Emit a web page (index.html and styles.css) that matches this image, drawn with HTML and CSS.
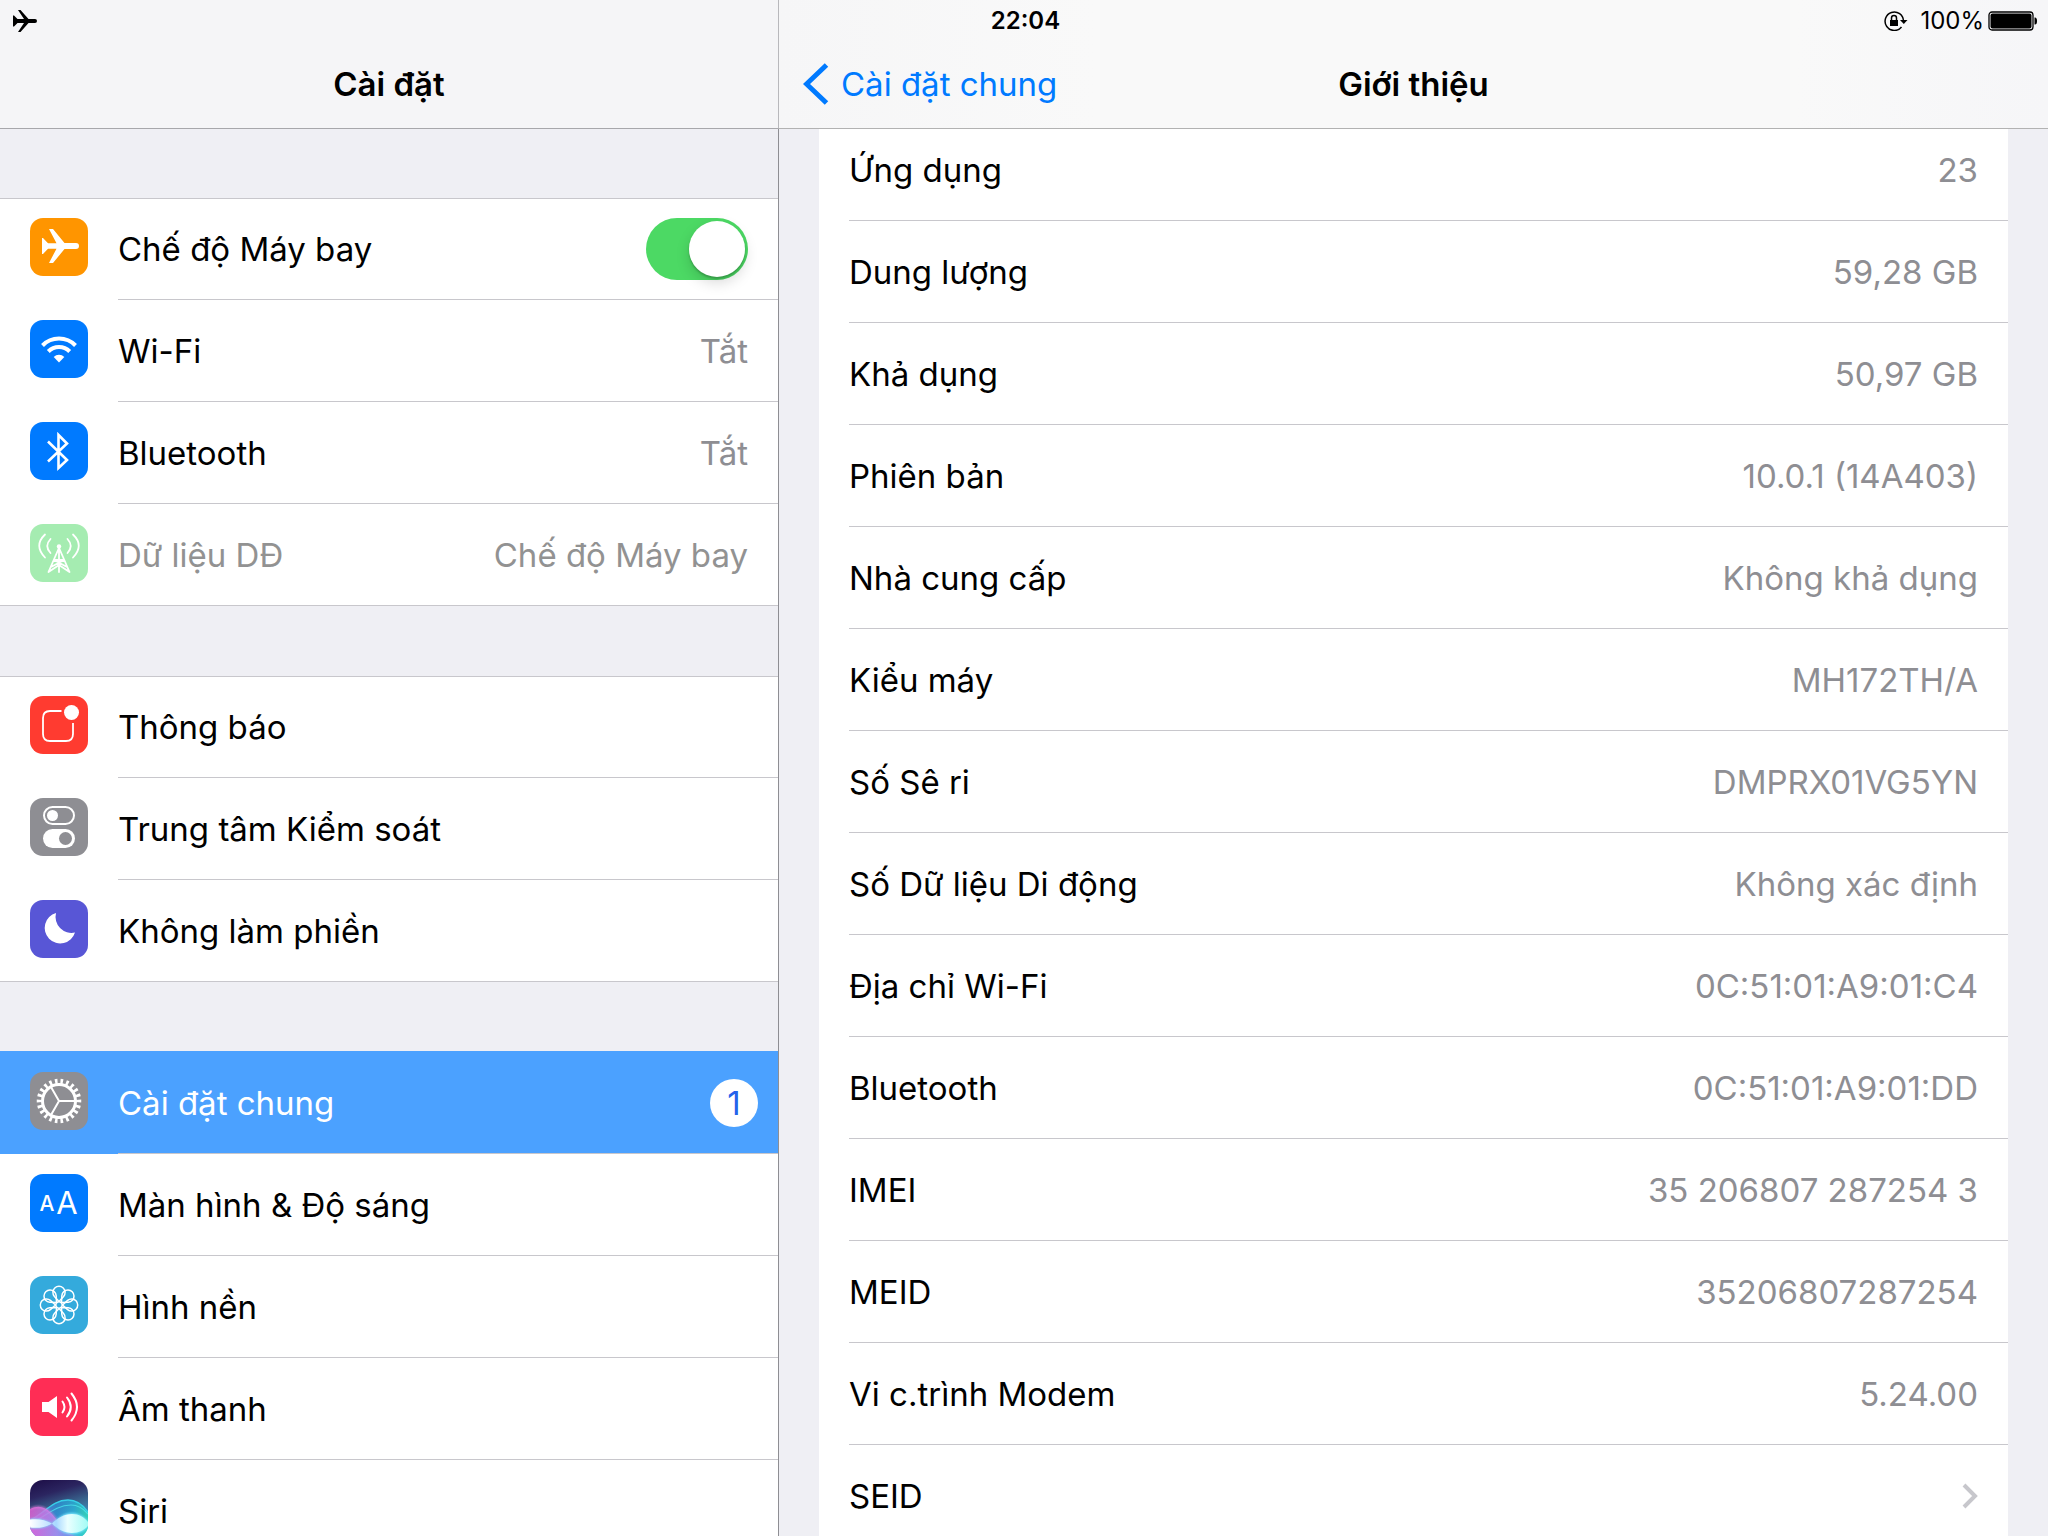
FILE: index.html
```
<!DOCTYPE html>
<html lang="vi">
<head>
<meta charset="utf-8">
<meta name="viewport" content="width=device-width, initial-scale=1">
<title>Cài đặt</title>
<link rel="stylesheet" href="styles.css">
</head>
<body>
<div class="screen">
  <div class="status-bar">
    <div class="status-left">
      <svg class="status-plane" viewBox="0 0 24 22" role="img" aria-label="Chế độ Máy bay"><path d="M0 5.500h1l3.500 3.500h6.500L5 0h2.500l8 9H22a2 2 0 0 1 0 4h-6.500l-8 9H5l6-9H4.500L1 16.500H0z"/></svg>
    </div>
    <time class="status-time">22:04</time>
    <div class="status-right">
      <svg class="status-lock" viewBox="0 0 24 20" role="img" aria-label="Khóa xoay"><path d="M17.500 16a9.200 9.200 0 1 1 2-6" fill="none" stroke="#000" stroke-width="1.500"/><path d="M16 9h7.500l-3.700 4z"/><path d="M6 9h8v6H6z"/><path d="M7.500 9V7a2.500 2.500 0 0 1 5 0v2" fill="none" stroke="#000" stroke-width="1.500"/></svg>
      <span class="status-percent">100%</span>
      <svg class="status-battery" viewBox="0 0 50 20" role="img" aria-label="Pin"><rect x="1" y="1" width="44" height="18" rx="3" fill="none" stroke="#000" stroke-width="1.300"/><rect x="2.500" y="2.500" width="41" height="15" rx="2"/><path d="M46.500 6.500h.5q2 0 2 3.500t-2 3.500h-.5z"/></svg>
    </div>
  </div>

  <aside class="sidebar">
    <header class="nav-bar nav-bar-side">
      <h1 class="nav-title">Cài đặt</h1>
    </header>
    <nav class="side-scroll">
      <ul class="group">
        <li class="row">
          <svg class="icon icon-orange" viewBox="0 0 58 58" aria-hidden="true"><path fill="#fff" d="M12 20h1l5 5.300h8.500L19 11h4l11.500 14H46a3 3 0 0 1 0 6H34.500L23 45h-4l7.500-14.300H18L13 36h-1z"/></svg>
          <label class="cell" for="airplane"><span class="label">Chế độ Máy bay</span><input class="switch" id="airplane" type="checkbox" role="switch" checked></label>
        </li>
        <li class="row">
          <svg class="icon icon-blue" viewBox="0 0 58 58" aria-hidden="true"><path fill="none" stroke="#fff" stroke-width="4" d="M12.500 25.500a23 23 0 0 1 33 0M18.300 31.500a15 15 0 0 1 21.400 0"/><path fill="#fff" d="M29 42.500l-5.300-5.500a7.500 7.500 0 0 1 10.600 0z"/></svg>
          <a class="cell" href="#wifi"><span class="label">Wi-Fi</span><span class="value">Tắt</span></a>
        </li>
        <li class="row">
          <svg class="icon icon-blue" viewBox="0 0 58 58" aria-hidden="true"><path fill="none" stroke="#fff" stroke-width="2.600" d="M18 19.500L37 38l-8.500 8V13l8.500 8.500L18 39.500"/></svg>
          <a class="cell" href="#bluetooth"><span class="label">Bluetooth</span><span class="value">Tắt</span></a>
        </li>
        <li class="row row-disabled">
          <svg class="icon icon-green" viewBox="0 0 58 58" aria-hidden="true"><g fill="none" stroke="#fff" stroke-width="1.800" stroke-linecap="round"><path d="M29 23v25M28.500 25L18.500 48M29.500 25l10 23M24 36h10M21 43l13-7M37 43l-13-7M18.500 48L29 41l10.500 7M20.500 15q-6.500 7 0 14M37.500 15q6.500 7 0 14M15 10.500q-11.500 11 0 23M43 10.500q11.500 11 0 23"/></g><circle cx="29" cy="22.500" r="2.200" fill="#fff"/></svg>
          <a class="cell" href="#mobile" aria-disabled="true"><span class="label">Dữ liệu DĐ</span><span class="value">Chế độ Máy bay</span></a>
        </li>
      </ul>

      <ul class="group">
        <li class="row">
          <svg class="icon icon-red" viewBox="0 0 58 58" aria-hidden="true"><path fill="none" stroke="#fff" stroke-width="1.800" d="M31.500 15H20q-7 0-7 7v16q0 7 7 7h16q7 0 7-7V27"/><circle cx="41.500" cy="16.500" r="7.500" fill="#fff"/></svg>
          <a class="cell" href="#notifications"><span class="label">Thông báo</span></a>
        </li>
        <li class="row">
          <svg class="icon icon-gray" viewBox="0 0 58 58" aria-hidden="true"><rect x="14" y="9" width="30" height="17" rx="8.500" fill="none" stroke="#fff" stroke-width="2"/><circle cx="22.500" cy="17.500" r="5.500" fill="#fff"/><rect x="13" y="31" width="32" height="19" rx="9.500" fill="#fff"/><circle cx="35.500" cy="40.500" r="6.500" fill="#8e8e93"/></svg>
          <a class="cell" href="#control"><span class="label">Trung tâm Kiểm soát</span></a>
        </li>
        <li class="row">
          <svg class="icon icon-purple" viewBox="0 0 58 58" aria-hidden="true"><path fill="#fff" d="M26 13a15.500 15.500 0 1 0 19 19.500A16 16 0 0 1 26 13z"/></svg>
          <a class="cell" href="#dnd"><span class="label">Không làm phiền</span></a>
        </li>
      </ul>

      <ul class="group">
        <li class="row row-active">
          <svg class="icon icon-gray" viewBox="0 0 58 58" aria-hidden="true"><g fill="none" stroke="#fff"><circle cx="29" cy="29" r="19.500" stroke-width="5.500" pathLength="220" stroke-dasharray="4.600 5.400" stroke-dashoffset="2.300"/><circle cx="29" cy="29" r="16.500" stroke-width="3"/><path stroke-width="2" d="M29 29h16M29 29l-8-13.900M29 29l-8 13.900"/></g></svg>
          <a class="cell" href="#general" aria-current="page"><span class="label">Cài đặt chung</span><span class="badge">1</span></a>
        </li>
        <li class="row">
          <svg class="icon icon-blue" viewBox="0 0 58 58" aria-hidden="true"><text class="glyph glyph-small" x="17" y="37">A</text><text class="glyph glyph-large" x="37" y="40">A</text></svg>
          <a class="cell" href="#display"><span class="label">Màn hình &amp; Độ sáng</span></a>
        </li>
        <li class="row">
          <svg class="icon icon-cyan" viewBox="0 0 58 58" aria-hidden="true">
            <defs><path id="petal" d="M0 -3.500L-4.600 -8.600A6.100 6.100 0 1 1 4.600 -8.600z"/></defs>
            <g transform="translate(29 29)" fill="none" stroke="#fff" stroke-width="1.500">
              <circle r="3.200"/>
              <use href="#petal"/>
              <use href="#petal" transform="rotate(45)"/>
              <use href="#petal" transform="rotate(90)"/>
              <use href="#petal" transform="rotate(135)"/>
              <use href="#petal" transform="rotate(180)"/>
              <use href="#petal" transform="rotate(225)"/>
              <use href="#petal" transform="rotate(270)"/>
              <use href="#petal" transform="rotate(315)"/>
            </g>
          </svg>
          <a class="cell" href="#wallpaper"><span class="label">Hình nền</span></a>
        </li>
        <li class="row">
          <svg class="icon icon-pink" viewBox="0 0 58 58" aria-hidden="true"><path fill="#fff" d="M12 24h6.500L27 18v22l-8.500-6H12z"/><path fill="none" stroke="#fff" stroke-width="2" stroke-linecap="round" d="M32.500 23.500q4 5.500 0 11M37 19.500q7.500 9.500 0 19M41.500 15.500q11 13.500 0 27"/></svg>
          <a class="cell" href="#sounds"><span class="label">Âm thanh</span></a>
        </li>
        <li class="row">
          <svg class="icon" viewBox="0 0 58 58" aria-hidden="true">
            <defs>
              <linearGradient id="siri-sky" x1="0" y1="0" x2="0.300" y2="1"><stop offset="0" stop-color="#1c0c45"/><stop offset="0.300" stop-color="#2b2560"/><stop offset="0.550" stop-color="#38628c"/><stop offset="1" stop-color="#48b4e0"/></linearGradient>
              <linearGradient id="siri-wave" x1="0" y1="0" x2="1" y2="0"><stop offset="0" stop-color="#8f7bf0"/><stop offset="0.450" stop-color="#2f8fd8"/><stop offset="0.750" stop-color="#28b5dc"/><stop offset="1" stop-color="#2fe3b4"/></linearGradient>
              <linearGradient id="siri-pink" x1="0" y1="0" x2="1" y2="0"><stop offset="0" stop-color="#e85fd6"/><stop offset="0.550" stop-color="#b48af0"/><stop offset="1" stop-color="#4f8fe8"/></linearGradient>
              <linearGradient id="siri-glow" x1="0" y1="0" x2="1" y2="0"><stop offset="0" stop-color="#fff"/><stop offset="0.450" stop-color="#a9d8ff"/><stop offset="0.650" stop-color="#eaffff"/><stop offset="1" stop-color="#a4fbf5"/></linearGradient>
              <filter id="siri-soft"><feGaussianBlur stdDeviation="0.800"/></filter>
            </defs>
            <rect width="58" height="58" fill="url(#siri-sky)"/>
            <path d="M0 40C14 34 22 20 38 20c9 0 15 5 20 12v26H0z" fill="url(#siri-wave)" opacity=".75"/>
            <path d="M0 44C16 36 26 25 41 25c7 0 12 3 17 9" fill="none" stroke="#4be4ee" stroke-width="1.200" opacity=".8"/>
            <path d="M0 40C14 34 22 20 38 20c9 0 15 5 20 12" fill="none" stroke="#36cfe8" stroke-width="1.300"/>
            <path d="M0 29c14-7 22 4 29 14 6 8 12 13 20 15H0z" fill="url(#siri-pink)" opacity=".8"/>
            <path d="M0 29c14-7 22 4 29 14 6 8 12 13 20 15" fill="none" stroke="#f57be6" stroke-width="1.200" filter="url(#siri-soft)"/>
            <path d="M0 39c8-1 15 0 22 4.500C28 38 34 33 42 33c7 0 12 4 16 8v6c-4 4-9 7-16 7-8 0-14-5-20-10.500C15 48 8 49 0 48z" fill="#7fe8ff" filter="url(#siri-soft)"/>
            <path d="M0 39.500c8-1 15 0 22 4C28 38 34 34 42 34c7 0 12 3 16 8v4c-4 4-9 7-16 7-8 0-14-4-20-9.500-7 4-14 5-22 4z" fill="url(#siri-glow)"/>
          </svg>
          <a class="cell" href="#siri"><span class="label">Siri</span></a>
        </li>
      </ul>
    </nav>
  </aside>

  <main class="detail">
    <header class="nav-bar nav-bar-detail">
      <a class="back" href="#general"><svg class="back-arrow" viewBox="0 0 26 42" aria-hidden="true"><path d="M23.500 2L3.500 21l20 19" fill="none" stroke="#007aff" stroke-width="5"/></svg>Cài đặt chung</a>
      <h2 class="nav-title">Giới thiệu</h2>
    </header>
    <div class="detail-scroll">
      <dl class="info">
        <div class="info-row"><dt>Ứng dụng</dt><dd>23</dd></div>
        <div class="info-row"><dt>Dung lượng</dt><dd>59,28 GB</dd></div>
        <div class="info-row"><dt>Khả dụng</dt><dd>50,97 GB</dd></div>
        <div class="info-row"><dt>Phiên bản</dt><dd>10.0.1 (14A403)</dd></div>
        <div class="info-row"><dt>Nhà cung cấp</dt><dd>Không khả dụng</dd></div>
        <div class="info-row"><dt>Kiểu máy</dt><dd>MH172TH/A</dd></div>
        <div class="info-row"><dt>Số Sê ri</dt><dd>DMPRX01VG5YN</dd></div>
        <div class="info-row"><dt>Số Dữ liệu Di động</dt><dd>Không xác định</dd></div>
        <div class="info-row"><dt>Địa chỉ Wi-Fi</dt><dd>0C:51:01:A9:01:C4</dd></div>
        <div class="info-row"><dt>Bluetooth</dt><dd>0C:51:01:A9:01:DD</dd></div>
        <div class="info-row"><dt>IMEI</dt><dd>35 206807 287254 3</dd></div>
        <div class="info-row"><dt>MEID</dt><dd>35206807287254</dd></div>
        <div class="info-row"><dt>Vi c.trình Modem</dt><dd>5.24.00</dd></div>
        <div class="info-row"><dt>SEID</dt><dd><svg class="disclosure" viewBox="0 0 16 26" aria-hidden="true"><path d="M2 2l11 11L2 24" fill="none" stroke="#c7c7cc" stroke-width="4"/></svg></dd></div>
      </dl>
    </div>
  </main>
</div>
</body>
</html>
```
FILE: styles.css
```
* {
  box-sizing: border-box;
}

body {
  margin: 0;
  background: #efeff4;
  color: #000;
  font-family: Inter, "Noto Sans", sans-serif;
  font-size: 33px;
  line-height: 40px;
}

ul, dl, dd, h1, h2 {
  margin: 0;
  padding: 0;
}

a {
  color: inherit;
  text-decoration: none;
}

.screen {
  display: grid;
  grid-template-columns: 779px 1fr;
  grid-template-rows: 40px 1fr;
  height: 100vh;
  overflow: hidden;
}

/* The status bar shares the top strip with both navigation bars. */
.status-bar {
  grid-area: 1 / 1 / 2 / 3;
  z-index: 1;
  display: grid;
  grid-template-columns: 1fr auto 1fr;
  align-items: center;
  padding: 1px 10px 0 13px;
  font-size: 24px;
}

.status-left,
.status-right {
  display: flex;
  align-items: center;
}

.status-right {
  justify-content: flex-end;
}

.status-plane {
  width: 24px;
  height: 22px;
}

.status-time {
  font-weight: 600;
}

.status-lock {
  width: 24px;
  height: 20px;
  margin-right: 12px;
}

.status-percent {
  margin-right: 4px;
}

.status-battery {
  width: 50px;
  height: 20px;
}

.sidebar,
.detail {
  grid-row: 1 / 3;
  display: flex;
  flex-direction: column;
  min-width: 0;
  min-height: 0;
}

.sidebar {
  grid-column: 1;
}

.detail {
  grid-column: 2;
}

.nav-bar {
  flex: none;
  display: grid;
  grid-template-columns: 1fr auto 1fr;
  align-items: center;
  height: 129px;
  padding-top: 40px;
  border-bottom: 1px solid #a7a7ab;
}

.nav-bar-side {
  background: #f5f5f7;
  border-right: 1px solid #b8b8bc;
}

.nav-bar-detail {
  background: linear-gradient(90deg, #f6f6f7, #f9f9f9 25%, #f9f9f9 80%, #f6f6f8);
  border-bottom-color: #b2b2b2;
}

.nav-title {
  grid-column: 2;
  font-size: 33px;
  font-weight: 600;
}

.back {
  grid-column: 1;
  grid-row: 1;
  display: flex;
  align-items: center;
  gap: 12px;
  padding-left: 24px;
  color: #007aff;
}

.back-arrow {
  width: 26px;
  height: 42px;
}

.side-scroll {
  flex: 1;
  min-height: 0;
  overflow: hidden;
  padding-top: 69px;
  border-right: 1px solid #8e8e93;
}

.group {
  list-style: none;
  background: #fff;
  box-shadow: inset 0 1px #c8c7cc, inset 0 -1px #c8c7cc;
}

.group + .group {
  margin-top: 70px;
}

.row {
  display: flex;
  height: 102px;
  padding-left: 30px;
}

.icon {
  flex: none;
  width: 58px;
  height: 58px;
  margin: 20px 30px 0 0;
  border-radius: 13px;
}

.icon-orange { background: #ff9500; }
.icon-blue { background: #007aff; }
.icon-green { background: #a5ecb1; }
.icon-red { background: #ff3b30; }
.icon-gray { background: #8e8e93; }
.icon-purple { background: #5856d6; }
.icon-cyan { background: #34aadc; }
.icon-pink { background: #ff2d55; }

.glyph {
  fill: #fff;
  text-anchor: middle;
}

.glyph-small {
  font-size: 21px;
  font-weight: 500;
}

.glyph-large {
  font-size: 31px;
}

.cell {
  flex: 1;
  display: flex;
  align-items: center;
  justify-content: space-between;
  padding-right: 30px;
  border-bottom: 1px solid #c8c7cc;
}

.row:last-child .cell {
  border-bottom-color: transparent;
}

.value {
  color: #8e8e93;
}

.row-disabled .label,
.row-disabled .value {
  color: #929292;
}

.row-active {
  background: #4ba1ff;
  box-shadow: 0 -1px #4ba1ff;
  color: #fff;
}

.row-active .cell {
  padding-right: 20px;
}

.badge {
  width: 48px;
  height: 48px;
  border-radius: 50%;
  background: #fff;
  color: #2563eb;
  line-height: 48px;
  text-align: center;
}

.switch {
  appearance: none;
  width: 102px;
  height: 62px;
  margin: 0;
  padding: 3px;
  border-radius: 31px;
  background: #4cd964;
}

.switch::before {
  content: "";
  display: block;
  width: 56px;
  height: 56px;
  margin-left: auto;
  border-radius: 50%;
  background: #fff;
  box-shadow: 0 6px 14px rgba(0, 0, 0, 0.15), 0 2px 2px rgba(0, 0, 0, 0.2);
}

.detail-scroll {
  flex: 1;
  min-height: 0;
  overflow: hidden;
  padding: 0 40px;
}

/* The list is scrolled slightly under the navigation bar. */
.info {
  margin-top: -10px;
  padding-left: 30px;
  background: #fff;
}

.info-row {
  display: flex;
  align-items: center;
  justify-content: space-between;
  height: 102px;
  padding-right: 30px;
  border-bottom: 1px solid #c8c7cc;
}

.info-row dd {
  color: #8e8e93;
}

.disclosure {
  display: block;
  width: 16px;
  height: 26px;
}
```
